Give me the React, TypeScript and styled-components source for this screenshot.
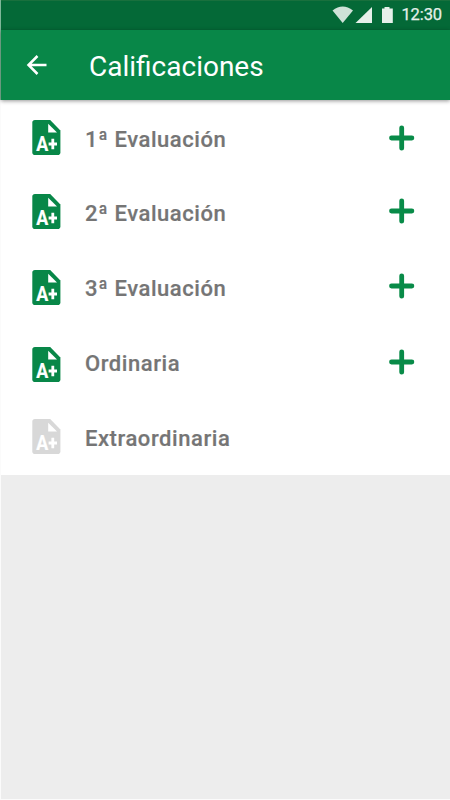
import React from "react";
import styled, { createGlobalStyle } from "styled-components";

const GlobalStyle = createGlobalStyle`
  * { box-sizing: border-box; }
  html, body { margin: 0; padding: 0; background: #fbfbfb; }
  body { font-family: Roboto, "Liberation Sans", sans-serif; }
`;

const Screen = styled.main`
  width: 450px;
  height: 800px;
  padding: 0 0 1px 1px;
  display: flex;
  flex-direction: column;
  overflow: hidden;
  background: linear-gradient(#7fb799 0 100px, #fbfbfb 100px);
`;

const StatusBar = styled.div`
  flex: 0 0 30px;
  display: flex;
  align-items: center;
  justify-content: flex-end;
  padding: 0 8px 1px 0;
  background: #046937;
  border-top: 1px solid #19703d;
  color: #e6f0ea;
`;

const StatusIcons = styled.svg`
  display: block;
  margin-right: 8px;
`;

const Clock = styled.time`
  font-size: 16.5px;
  line-height: 28px;
  font-weight: 400;
  letter-spacing: -0.1px;
  -webkit-text-stroke: 0.25px currentColor;
`;

const AppBar = styled.header`
  flex: 0 0 70px;
  display: flex;
  align-items: center;
  padding: 3px 0 0 25px;
  background: #088748;
  color: #fff;
  box-shadow: 0 1px 4px rgba(0, 0, 0, 0.42);
  z-index: 1;
`;

const BackButton = styled.button`
  display: flex;
  width: 63px;
  padding: 0;
  margin-top: -3px;
  border: 0;
  background: none;
  color: inherit;
`;

const Title = styled.h1`
  margin: 0;
  font-size: 28px;
  line-height: 34px;
  font-weight: 400;
`;

const List = styled.ul`
  margin: 0;
  padding: 0;
  list-style: none;
  background: #fff;
`;

const Row = styled.li`
  display: flex;
  align-items: flex-start;
  height: 75px;
  padding: 0 35px 0 31px;
`;

const FileIcon = styled.svg<{ $top: number; $disabled: boolean }>`
  display: block;
  flex: none;
  margin-top: ${(p) => p.$top}px;
  color: ${(p) => (p.$disabled ? "#d8d8d8" : "#088748")};
`;

const Grade = styled.text`
  font: 700 19.5px Roboto, "Liberation Sans", sans-serif;
  fill: #fff;
  stroke: #fff;
  stroke-width: 0.2px;
`;

const Label = styled.span<{ $top: number }>`
  flex: 1;
  margin: ${(p) => p.$top}px 0 0 24px;
  font-size: 22px;
  line-height: 28px;
  font-weight: 500;
  letter-spacing: 0.56px;
  color: #757575;
  -webkit-text-stroke: 0.2px currentColor;
  white-space: nowrap;
`;

const AddButton = styled.button<{ $top: number }>`
  display: block;
  flex: none;
  margin-top: ${(p) => p.$top}px;
  padding: 0;
  border: 0;
  background: none;
  color: #088b48;
`;

const PlusIcon = styled.svg`
  display: block;
`;

const EmptyArea = styled.div`
  flex: 1;
  background: #ededed;
`;

type Evaluation = {
  name: string;
  iconTop: number;
  labelTop: number;
  addTop?: number;
};

const evaluations: Evaluation[] = [
  { name: "1ª Evaluación", iconTop: 20, labelTop: 26, addTop: 25 },
  { name: "2ª Evaluación", iconTop: 19.3, labelTop: 25, addTop: 23.2 },
  { name: "3ª Evaluación", iconTop: 20.4, labelTop: 25, addTop: 23.2 },
  { name: "Ordinaria", iconTop: 22.4, labelTop: 25, addTop: 24.2 },
  { name: "Extraordinaria", iconTop: 19, labelTop: 25 },
];

export default function App() {
  return (
    <>
      <GlobalStyle />
      <Screen>
        <StatusBar>
          <StatusIcons width="62" height="18" viewBox="0 0 62 18" fill="currentColor">
            <path d="M1.5 4.5Q11.7-3.5 22 4.5L11.7 17Z" opacity="0.9" />
            <path d="M24.5 17L41 1V17Z" />
            <path d="M51 2.5H53.5V1H58.5V2.5H61.8V17H51Z" />
          </StatusIcons>
          <Clock>12:30</Clock>
        </StatusBar>
        <AppBar>
          <BackButton aria-label="Atrás">
            <svg width="22" height="22" viewBox="0 0 22 22" fill="none" stroke="currentColor" strokeWidth="2.5">
              <path d="M20.5 11H3M11.5 2L2.5 11L11.5 20" />
            </svg>
          </BackButton>
          <Title>Calificaciones</Title>
        </AppBar>
        <List>
          {evaluations.map((item) => (
            <Row key={item.name}>
              <FileIcon
                $top={item.iconTop}
                $disabled={item.addTop === undefined}
                width="29"
                height="36"
                viewBox="0 0 29 36"
              >
                <path
                  d="M3 0H18.2L28.4 10.5V32.2Q28.4 35 25.6 35H3Q.3 35 .3 32.2V2.8Q.3 0 3 0Z"
                  fill="currentColor"
                />
                <path d="M16.2 3.7V12.5H25Z" fill="#fff" />
                <Grade x="4.3" y="30.9" textLength="12" lengthAdjust="spacingAndGlyphs">A</Grade>
                <path d="M16.6 24H25M20.8 18.7V29.3" stroke="#fff" strokeWidth="2.8" />
              </FileIcon>
              <Label $top={item.labelTop}>{item.name}</Label>
              {item.addTop !== undefined && (
                <AddButton $top={item.addTop} aria-label={`Abrir ${item.name}`}>
                  <PlusIcon width="26" height="26" viewBox="0 0 26 26">
                    <path
                      d="M2.5 13H22.9M12.7 2.8V23.2"
                      fill="none"
                      stroke="currentColor"
                      strokeWidth="4.8"
                      strokeLinecap="round"
                    />
                  </PlusIcon>
                </AddButton>
              )}
            </Row>
          ))}
        </List>
        <EmptyArea />
      </Screen>
    </>
  );
}
